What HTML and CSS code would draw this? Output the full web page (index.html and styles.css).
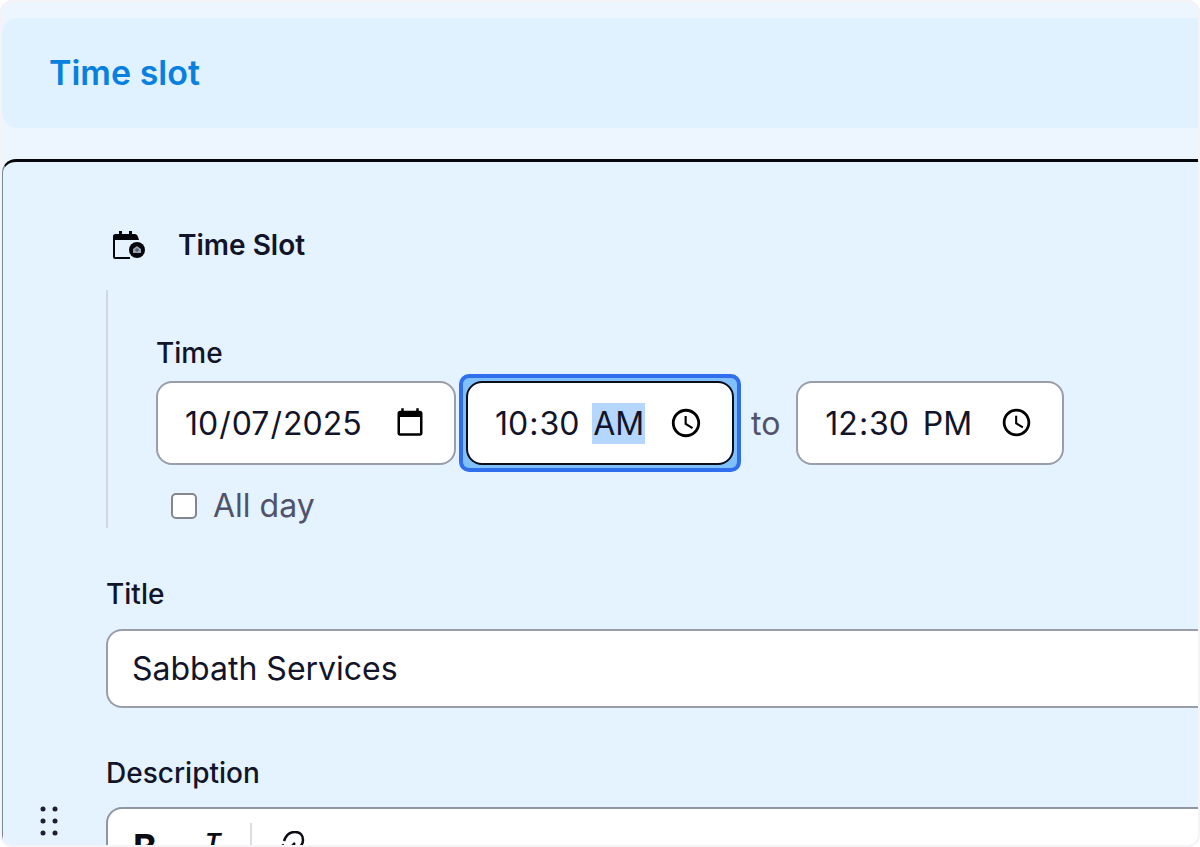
FILE: index.html
```
<!DOCTYPE html>
<html lang="en">
<head>
    <meta charset="UTF-8">
    <meta name="viewport" content="width=device-width, initial-scale=1.0">
    <title>Time slot</title>
    <link rel="stylesheet" href="styles.css">
</head>
<body>
    <div class="frame">
        <header class="slot-header">
            <h1>Time slot</h1>
        </header>

        <form class="slot-card">
            <div class="drag-handle">
                <svg width="20" height="32" viewBox="0 0 20 32" fill="#1d1f30">
                    <circle cx="4" cy="4" r="2.5"/>
                    <circle cx="16" cy="4" r="2.5"/>
                    <circle cx="4" cy="16" r="2.5"/>
                    <circle cx="16" cy="16" r="2.5"/>
                    <circle cx="4" cy="28" r="2.5"/>
                    <circle cx="16" cy="28" r="2.5"/>
                </svg>
            </div>

            <div class="slot-body">
                <div class="section-title">
                    <svg width="34" height="28" viewBox="0 0 34 28">
                        <path d="M3 3h4V0h3v3h7V0h3v3h3c2 0 3 2 4 6H1V5c0-1 1-2 2-2z" fill="#05060c"/>
                        <path d="M2 8v18q0 1 1 1h15" fill="none" stroke="#05060c" stroke-width="2"/>
                        <circle cx="25" cy="19" r="8" fill="#05060c"/>
                        <path d="M25 15l4 3v4h-8v-4z" fill="#9aa3ad"/>
                        <path d="M25 17v4M23 19h4" stroke="#454c56" stroke-width="1"/>
                    </svg>
                    <h2>Time Slot</h2>
                </div>

                <div class="time-group">
                    <label for="slotDate">Time</label>
                    <div class="time-row">
                        <input type="date" class="field date-field" id="slotDate" value="2025-10-07">
                        <span class="focus-ring">
                            <input type="time" class="field time-field active" id="startTime" value="10:30" aria-label="Start time">
                        </span>
                        <span class="to">to</span>
                        <input type="time" class="field time-field" id="endTime" value="12:30" aria-label="End time">
                    </div>
                    <div class="all-day">
                        <input type="checkbox" id="allDay">
                        <label for="allDay">All day</label>
                    </div>
                </div>

                <label for="slotTitle">Title</label>
                <input type="text" class="field title-field" id="slotTitle" value="Sabbath Services">

                <label for="slotDescription">Description</label>
                <div class="editor">
                    <div class="toolbar">
                        <button type="button" class="tool bold">B</button>
                        <button type="button" class="tool italic">I</button>
                        <span class="divider"></span>
                        <button type="button" class="tool" aria-label="Link">
                            <svg width="32" height="32" viewBox="0 0 32 32" fill="none" stroke="#0b0c14" stroke-width="2.500">
                                <path d="M8 10c2-6 6-9 11-9c5 0 8 3 8 8c0 4-3 8-7 9"/>
                                <path d="M22 22c-2 6-6 9-11 9c-5 0-8-3-8-8c0-5 2-8 5-9"/>
                                <path d="M11 20l8-8"/>
                            </svg>
                        </button>
                    </div>
                    <textarea id="slotDescription"></textarea>
                </div>
            </div>
        </form>
    </div>
</body>
</html>
```
FILE: styles.css
```
* {
    box-sizing: border-box;
}

body {
    margin: 0;
    background-color: #fff;
    font-family: Inter, "Liberation Sans", sans-serif;
    color: #12142a;
    overflow: hidden;
}

.frame {
    height: 100vh;
    padding-top: 16px;
    border: 2px solid #f5f3f6;
    border-radius: 12px;
    background-color: #edf5ff;
    overflow: hidden;
}

.slot-header {
    padding: 32px 47px;
    border-radius: 16px 0 0 16px;
    background-color: #e0f2ff;
}

.slot-header h1 {
    margin: 0;
    font-size: 34px;
    line-height: 46px;
    font-weight: 600;
    color: #0880e0;
}

.slot-card {
    display: grid;
    grid-template-columns: 103px 1fr;
    margin-top: 31px;
    border-top: 3px solid #05070c;
    border-left: 1px solid #7d8794;
    border-radius: 14px 0 0 0;
    background-color: #e4f3ff;
}

.drag-handle {
    align-self: center;
    padding-left: 36px;
}

.slot-body {
    padding: 65px 0;
}

.slot-body label {
    display: block;
    font-size: 28px;
    line-height: 36px;
    font-weight: 500;
}

.section-title {
    display: flex;
    align-items: center;
    gap: 32px;
    padding-left: 6px;
}

.section-title h2 {
    margin: 0;
    font-size: 28px;
    line-height: 36px;
    font-weight: 600;
}

.time-group {
    margin: 27px 0 48px;
    padding: 45px 0 2px 48px;
    border-left: 2px solid #d2d6dd;
}

.time-row {
    display: flex;
    align-items: center;
    margin-top: 3px;
}

.field {
    height: 84px;
    padding: 0 26px;
    border: 2px solid #9a9dab;
    border-radius: 16px;
    background-color: #fff;
    color: #12142a;
    font-family: inherit;
    font-size: 32px;
    outline: none;
}

.date-field {
    width: 300px;
}

.time-field {
    width: 268px;
}

.time-field::-webkit-datetime-edit-ampm-field {
    margin-left: 6px;
}

.focus-ring {
    display: flex;
    margin-left: 3px;
    padding: 3px;
    border: 4px solid #2f6fed;
    border-radius: 10px;
    background-color: #80c1fc;
}

.active {
    border-color: #0b0d1c;
}

.active::-webkit-datetime-edit-ampm-field {
    background-color: #b5d7ff;
}

.to {
    padding: 0 16px 0 10px;
    font-size: 32px;
    color: #51526a;
}

.all-day {
    display: flex;
    align-items: center;
    gap: 16px;
    padding: 14px 0 0 15px;
}

.all-day input {
    appearance: none;
    width: 26px;
    height: 26px;
    margin: 0;
    border: 2px solid #85868c;
    border-radius: 5px;
    background-color: #fff;
}

.slot-body .all-day label {
    font-size: 32px;
    line-height: 40px;
    font-weight: 400;
    color: #51526a;
}

.title-field {
    width: 100%;
    height: 79px;
    margin: 17px 0 47px;
    padding: 0 24px;
    border-right: none;
    border-radius: 16px 0 0 16px;
}

.editor {
    margin-top: 16px;
    border: 2px solid #9095a2;
    border-right: none;
    border-radius: 16px 0 0 16px;
    background-color: #fff;
    overflow: hidden;
}

.toolbar {
    display: flex;
    align-items: center;
    padding: 14px 16px;
}

.tool {
    display: flex;
    align-items: center;
    justify-content: center;
    width: 56px;
    height: 48px;
    margin-right: 14px;
    padding: 0;
    border: none;
    background-color: transparent;
    color: #0b0c14;
    font-family: inherit;
    font-size: 36px;
}

.bold {
    width: 42px;
    font-weight: 700;
}

.italic {
    padding-left: 8px;
    font-family: "Liberation Mono", monospace;
    font-style: italic;
}

.divider {
    width: 2px;
    height: 48px;
    margin-right: 12px;
    background-color: #dcdde3;
}

textarea {
    display: block;
    width: 100%;
    height: 532px;
    padding: 24px;
    border: none;
    font-family: inherit;
    font-size: 32px;
    resize: none;
    outline: none;
}
```
